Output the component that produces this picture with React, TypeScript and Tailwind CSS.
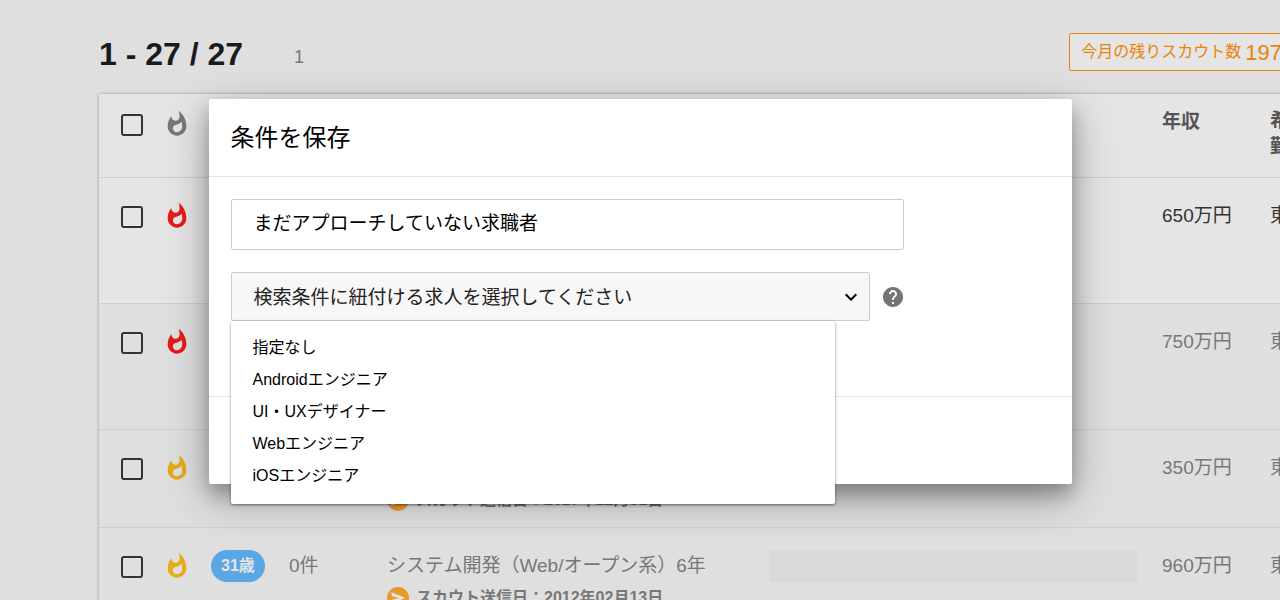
import { MdExpandMore, MdHelp, MdWhatshot } from 'react-icons/md'

interface Candidate {
  id: number
  flame: string
  age?: string
  count?: string
  career?: string
  scoutDate?: string
  company?: boolean
  salary: string
  place: string
  unread?: boolean
  tall?: boolean
}

const candidates: Candidate[] = [
  { id: 1, flame: 'text-[#e51b17]', salary: '650万円', place: '東', unread: true, tall: true },
  { id: 2, flame: 'text-[#e51b17]', salary: '750万円', place: '東', tall: true },
  { id: 3, flame: 'text-[#e5ac18]', scoutDate: '2017年12月31日', salary: '350万円', place: '東' },
  {
    id: 4,
    flame: 'text-[#e5ac18]',
    age: '31歳',
    count: '0件',
    career: 'システム開発（Web/オープン系）6年',
    scoutDate: '2012年02月13日',
    company: true,
    salary: '960万円',
    place: '東',
  },
]

const jobs = ['指定なし', 'Androidエンジニア', 'UI・UXデザイナー', 'Webエンジニア', 'iOSエンジニア']

function Check({ label }: { label: string }) {
  return (
    <input
      type="checkbox"
      aria-label={label}
      className="block w-[22px] h-[22px] appearance-none border-2 border-[#333] rounded-[3px]"
    />
  )
}

function ScoutMark() {
  return (
    <svg viewBox="0 0 24 24" className="w-[22px] h-[22px] shrink-0" aria-hidden="true">
      <circle cx="12" cy="12" r="12" fill="#e8982c" />
      <path d="M4.5 5.5 20 12 4.5 18.5l1-4.6 7.500-1.900-7.500-1.900z" fill="#e4e4e4" />
    </svg>
  )
}

function CandidateRow({ row }: { row: Candidate }) {
  return (
    <tr
      className={`align-top border-t border-[#cfcfcf] ${row.tall ? 'h-[126px]' : 'h-[98px]'} ${
        row.unread ? 'bg-[#e5e5e5] text-[#333]' : 'bg-[#dfdfdf] text-[#777]'
      }`}
    >
      <td className="pl-[22px] pt-7">
        <Check label={`求職者${row.id}を選択`} />
      </td>
      <td className="pl-2 pt-6">
        <MdWhatshot size={28} className={row.flame} />
      </td>
      <td className="pt-[22px]">
        {row.age && (
          <span className="inline-flex items-center h-8 px-[10px] rounded-full bg-[#5ba7e5] text-[#e5e5e5] text-base font-bold">
            {row.age}
          </span>
        )}
      </td>
      <td className="pt-6">{row.count}</td>
      <td className="pt-6">
        <p className="min-h-7">{row.career}</p>
        {row.scoutDate && (
          <p className="flex items-center gap-[7px] mt-1 text-base leading-7 font-bold">
            <ScoutMark />
            スカウト送信日：{row.scoutDate}
          </p>
        )}
      </td>
      <td className="pt-[22px] pr-6">{row.company && <div className="h-8 bg-[#d9d9d9]" />}</td>
      <td className="pt-6">{row.salary}</td>
      <td className="pt-6">{row.place}</td>
    </tr>
  )
}

function SaveDialog() {
  return (
    <div
      role="dialog"
      aria-labelledby="save-title"
      className="w-[863px] bg-white rounded-xs text-black shadow-[0_14px_45px_rgba(0,0,0,0.3),0_10px_18px_rgba(0,0,0,0.25)]"
    >
      <h2 id="save-title" className="h-[78px] px-[22px] pt-[21px] text-2xl leading-9 border-b border-[#e6e6e6]">
        条件を保存
      </h2>
      <div className="h-[220px] px-[22px] pt-[22px] border-b border-[#e6e6e6]">
        <input
          type="text"
          aria-label="条件名"
          defaultValue="まだアプローチしていない求職者"
          className="block w-[673px] h-[51px] px-[22px] pb-[6px] text-[19px] border border-[#ccc] rounded-xs"
        />
        <div className="flex items-center gap-[11px] mt-[22px]">
          <div className="relative w-[639px]">
            <button
              type="button"
              aria-haspopup="listbox"
              aria-expanded="true"
              className="flex items-center justify-between w-full h-[49px] pl-[22px] pr-[6px] text-[19px] text-[#222] bg-[#f7f7f7] border border-[#ccc] rounded-xs"
            >
              <span className="pt-[3px]">検索条件に紐付ける求人を選択してください</span>
              <MdExpandMore size={24} className="text-black" />
            </button>
            <ul
              role="listbox"
              aria-label="求人"
              className="absolute top-full left-0 w-[604px] pt-[11px] pb-3 bg-white rounded-xs shadow-[0_1px_3px_rgba(0,0,0,0.5)]"
            >
              {jobs.map((job) => (
                <li key={job} role="option" aria-selected="false" className="px-[22px] text-base leading-8">
                  {job}
                </li>
              ))}
            </ul>
          </div>
          <button type="button" aria-label="ヘルプ">
            <MdHelp size={24} className="text-[#757575]" />
          </button>
        </div>
      </div>
      <div className="h-[87px]" />
    </div>
  )
}

export default function App() {
  return (
    <div className="relative h-screen overflow-hidden bg-[#dfdfdf] font-['Liberation_Sans','Noto_Sans_CJK_JP',sans-serif]">
      <header className="flex items-center h-[94px] pl-[99px] pt-[10px] whitespace-nowrap">
        <h1 className="pt-1 text-[32px] font-bold text-[#1a1a1a]">1 - 27 / 27</h1>
        <span className="ml-[51px] pt-[10px] text-lg text-[#777]">1</span>
        <div className="ml-auto -mr-[36px] flex items-center h-[38px] px-[11px] text-base text-[#e8830c] bg-[#e5e5e5] border border-[#e8830c] rounded-xs">
          今月の残りスカウト数<span className="ml-1 text-[22px]">197通</span>
        </div>
      </header>

      <main className="ml-[99px]">
        <table className="w-[1320px] table-fixed text-[19px] leading-7 shadow-[0_0_3px_rgba(0,0,0,0.35)]">
          <colgroup>
            <col className="w-[56px]" />
            <col className="w-[56px]" />
            <col className="w-[78px]" />
            <col className="w-[98px]" />
            <col className="w-[382px]" />
            <col className="w-[393px]" />
            <col className="w-[108px]" />
            <col />
          </colgroup>
          <thead>
            <tr className="h-[83px] align-top text-left text-[#555] bg-[#e5e5e5]">
              <td className="pl-[22px] pt-5">
                <Check label="すべて選択" />
              </td>
              <td className="pl-2 pt-4">
                <MdWhatshot size={28} className="text-[#777]" />
              </td>
              <td colSpan={4} />
              <th className="pt-[14px]">年収</th>
              <th className="pt-[14px] leading-[26px]">
                希望
                <br />
                勤務地
              </th>
            </tr>
          </thead>
          <tbody>
            {candidates.map((row) => (
              <CandidateRow key={row.id} row={row} />
            ))}
          </tbody>
        </table>
      </main>

      <div className="absolute inset-x-0 top-[99px] flex justify-center">
        <SaveDialog />
      </div>
    </div>
  )
}
